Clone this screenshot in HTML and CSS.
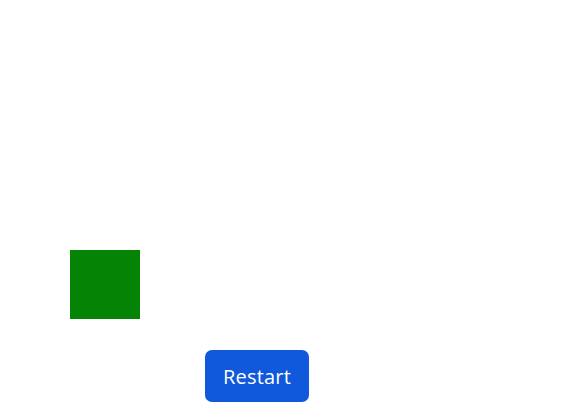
FILE: index.html
```html
<!DOCTYPE html>
<html>
<head>
<meta charset="utf-8">
<link rel="stylesheet" href="styles.css">
</head>
<body>
<div class="stage">
  <div class="box"></div>
</div>
<div class="controls">
  <button class="restart">Restart</button>
</div>
</body>
</html>
```
FILE: styles.css
```css
html, body {
  margin: 0;
  padding: 0;
  background: #fff;
}
.stage {
  height: 350px;
  padding-top: 250px;
  padding-left: 70px;
  box-sizing: border-box;
}
.box {
  width: 70px;
  height: 69px;
  background: #058305;
}
.controls {
  padding-left: 205px;
}
.restart {
  width: 104px;
  height: 52px;
  border: none;
  border-radius: 7px;
  background: #1058dc;
  color: #fff;
  font-family: "Open Sans", "Noto Sans", sans-serif;
  font-size: 20px;
  font-weight: 500;
  letter-spacing: 0.2px;
  padding: 0;
}
```
